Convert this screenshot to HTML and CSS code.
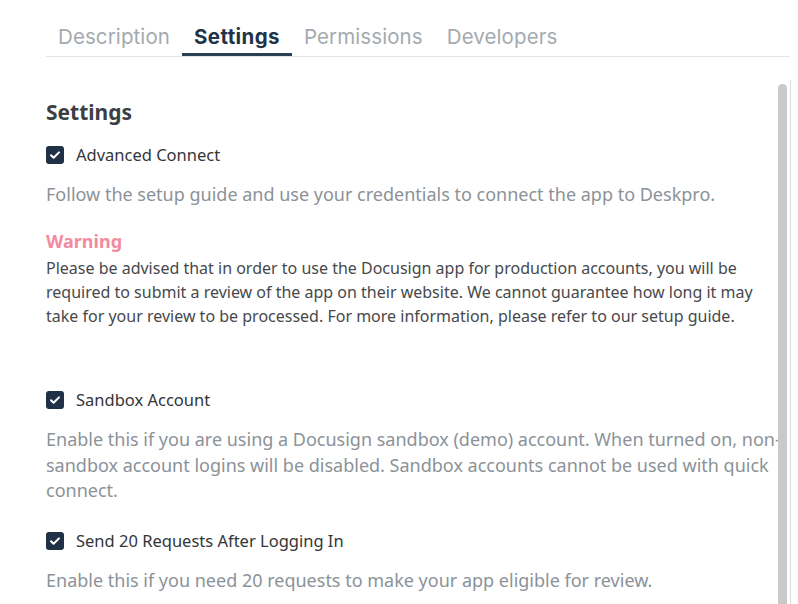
FILE: index.html
```html
<!DOCTYPE html>
<html>
<head>
<meta charset="utf-8">
<link rel="stylesheet" href="styles.css">
</head>
<body>
<div class="page">
  <nav class="tabs">
    <div class="tab">Description</div>
    <div class="tab active">Settings</div>
    <div class="tab">Permissions</div>
    <div class="tab">Developers</div>
  </nav>
  <main class="content">
    <h2 class="title">Settings</h2>
    <label class="check">
      <span class="box"><svg viewBox="0 0 18 18" width="18" height="18"><path d="M5 9.2l2.6 2.6L13 6.4" fill="none" stroke="#fff" stroke-width="2" stroke-linecap="round" stroke-linejoin="round"/></svg></span>
      <span class="check-label">Advanced Connect</span>
    </label>
    <p class="desc">Follow the setup guide and use your credentials to connect the app to Deskpro.</p>
    <div class="warning">
      <div class="warning-title">Warning</div>
      <p class="warning-text">Please be advised that in order to use the Docusign app for production accounts, you will be required to submit a review of the app on their website. We cannot guarantee how long it may take for your review to be processed. For more information, please refer to our setup guide.</p>
    </div>
    <label class="check">
      <span class="box"><svg viewBox="0 0 18 18" width="18" height="18"><path d="M5 9.2l2.6 2.6L13 6.4" fill="none" stroke="#fff" stroke-width="2" stroke-linecap="round" stroke-linejoin="round"/></svg></span>
      <span class="check-label">Sandbox Account</span>
    </label>
    <p class="desc">Enable this if you are using a Docusign sandbox (demo) account. When turned on, non-sandbox account logins will be disabled. Sandbox accounts cannot be used with quick connect.</p>
    <label class="check">
      <span class="box"><svg viewBox="0 0 18 18" width="18" height="18"><path d="M5 9.2l2.6 2.6L13 6.4" fill="none" stroke="#fff" stroke-width="2" stroke-linecap="round" stroke-linejoin="round"/></svg></span>
      <span class="check-label">Send 20 Requests After Logging In</span>
    </label>
    <p class="desc">Enable this if you need 20 requests to make your app eligible for review.</p>
    <div class="scrollbar"><div class="thumb"></div></div>
  </main>
</div>
</body>
</html>
```
FILE: styles.css
```css
html, body {
  margin: 0;
  padding: 0;
  background: #fff;
}
body {
  font-family: "Noto Sans", "Open Sans", sans-serif;
  width: 798px;
  height: 604px;
  overflow: hidden;
}
.page {
  padding-left: 46px;
  padding-right: 8px;
}
.tabs {
  display: flex;
  margin-top: 20px;
  border-bottom: 1px solid #e2e4e6;
  font-family: "Inter", "Roboto", sans-serif;
  font-size: 20.5px;
}
.tab {
  padding: 5px 12px 4px;
  color: #a4aaaf;
  border-bottom: 3px solid transparent;
  line-height: 24px;
  letter-spacing: 0.1px;
}
.tab.active {
  color: #1f3349;
  font-weight: 700;
  letter-spacing: 0.4px;
  border-bottom-color: #2b3e53;
}
.content {
  position: relative;
  padding-top: 40px;
  padding-right: 8px;
}
.title {
  margin: 0 0 16px;
  font-size: 21px;
  font-weight: 700;
  color: #3c3f42;
  line-height: 30px;
}
.check {
  display: flex;
  align-items: center;
  gap: 12px;
}
.box {
  width: 18px;
  height: 18px;
  border-radius: 3px;
  background: #1e3147;
  display: flex;
}
.check-label {
  font-size: 16.5px;
  color: #333638;
  line-height: 24px;
}
.desc {
  margin: 15px 0 0;
  font-size: 18px;
  line-height: 25.5px;
  color: #8b9298;
}
.desc + .check {
  margin-top: 25.5px;
}
.warning {
  margin: 21px 0 60.5px;
}
.warning-title {
  font-size: 18px;
  font-weight: 700;
  color: #f28ba0;
  line-height: 24px;
}
.warning-text {
  margin: 3px 0 0;
  font-size: 16px;
  line-height: 24px;
  color: #47494b;
}
.scrollbar {
  position: absolute;
  left: 732px;
  top: 23px;
  width: 12px;
  height: 600px;
  border-right: 1px solid #dcdcdc;
}
.thumb {
  position: absolute;
  left: 0;
  top: 4px;
  width: 9px;
  height: 600px;
  border-radius: 5px;
  background: #c9c9c9;
}
```
